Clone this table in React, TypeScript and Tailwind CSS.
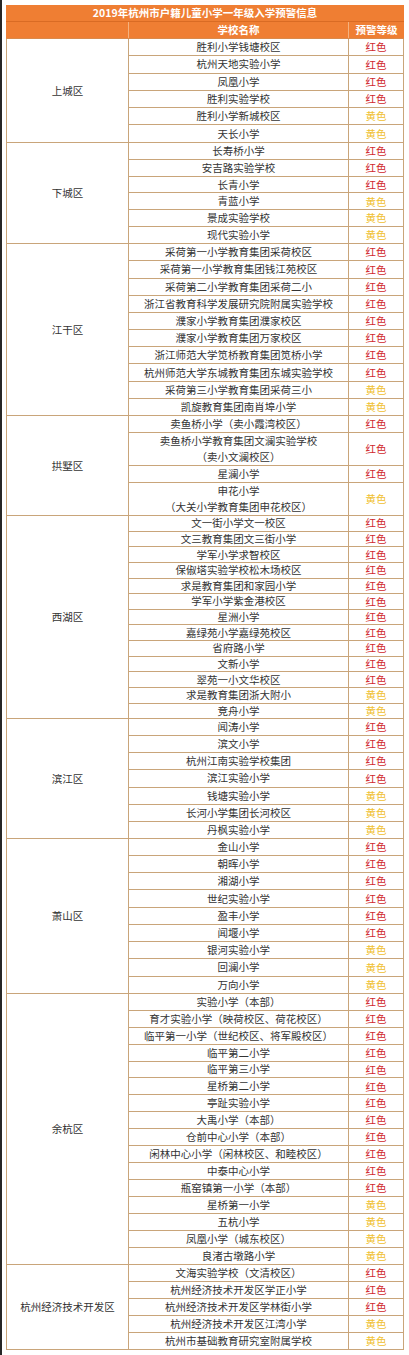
type School = { name: string; sub?: string; level: "红色" | "黄色" };
type District = { name: string; rowH: string; dblH?: string; schools: School[] };

const R = "红色" as const;
const Y = "黄色" as const;

const districts: District[] = [
  {
    name: "上城区",
    rowH: "h-[17.3px]",
    schools: [
      { name: "胜利小学钱塘校区", level: R },
      { name: "杭州天地实验小学", level: R },
      { name: "凤凰小学", level: R },
      { name: "胜利实验学校", level: R },
      { name: "胜利小学新城校区", level: Y },
      { name: "天长小学", level: Y },
    ],
  },
  {
    name: "下城区",
    rowH: "h-[16.9px]",
    schools: [
      { name: "长寿桥小学", level: R },
      { name: "安吉路实验学校", level: R },
      { name: "长青小学", level: R },
      { name: "青蓝小学", level: Y },
      { name: "景成实验学校", level: Y },
      { name: "现代实验小学", level: Y },
    ],
  },
  {
    name: "江干区",
    rowH: "h-[17.2px]",
    schools: [
      { name: "采荷第一小学教育集团采荷校区", level: R },
      { name: "采荷第一小学教育集团钱江苑校区", level: R },
      { name: "采荷第二小学教育集团采荷二小", level: R },
      { name: "浙江省教育科学发展研究院附属实验学校", level: R },
      { name: "濮家小学教育集团濮家校区", level: R },
      { name: "濮家小学教育集团万家校区", level: R },
      { name: "浙江师范大学笕桥教育集团笕桥小学", level: R },
      { name: "杭州师范大学东城教育集团东城实验学校", level: R },
      { name: "采荷第三小学教育集团采荷三小", level: Y },
      { name: "凯旋教育集团南肖埠小学", level: Y },
    ],
  },
  {
    name: "拱墅区",
    rowH: "h-[16.5px]",
    dblH: "h-[33.5px]",
    schools: [
      { name: "卖鱼桥小学（卖小霞湾校区）", level: R },
      { name: "卖鱼桥小学教育集团文澜实验学校", sub: "（卖小文澜校区）", level: R },
      { name: "星澜小学", level: R },
      { name: "申花小学", sub: "（大关小学教育集团申花校区）", level: Y },
    ],
  },
  {
    name: "西湖区",
    rowH: "h-[15.64px]",
    schools: [
      { name: "文一街小学文一校区", level: R },
      { name: "文三教育集团文三街小学", level: R },
      { name: "学军小学求智校区", level: R },
      { name: "保俶塔实验学校松木场校区", level: R },
      { name: "求是教育集团和家园小学", level: R },
      { name: "学军小学紫金港校区", level: R },
      { name: "星洲小学", level: R },
      { name: "嘉绿苑小学嘉绿苑校区", level: R },
      { name: "省府路小学", level: R },
      { name: "文新小学", level: R },
      { name: "翠苑一小文华校区", level: R },
      { name: "求是教育集团浙大附小", level: Y },
      { name: "竞舟小学", level: Y },
    ],
  },
  {
    name: "滨江区",
    rowH: "h-[17.1px]",
    schools: [
      { name: "闻涛小学", level: R },
      { name: "滨文小学", level: R },
      { name: "杭州江南实验学校集团", level: R },
      { name: "滨江实验小学", level: R },
      { name: "钱塘实验小学", level: Y },
      { name: "长河小学集团长河校区", level: Y },
      { name: "丹枫实验小学", level: Y },
    ],
  },
  {
    name: "萧山区",
    rowH: "h-[17.22px]",
    schools: [
      { name: "金山小学", level: R },
      { name: "朝晖小学", level: R },
      { name: "湘湖小学", level: R },
      { name: "世纪实验小学", level: R },
      { name: "盈丰小学", level: R },
      { name: "闻堰小学", level: R },
      { name: "银河实验小学", level: Y },
      { name: "回澜小学", level: Y },
      { name: "万向小学", level: Y },
    ],
  },
  {
    name: "余杭区",
    rowH: "h-[16.94px]",
    schools: [
      { name: "实验小学（本部）", level: R },
      { name: "育才实验小学（映荷校区、荷花校区）", level: R },
      { name: "临平第一小学（世纪校区、将军殿校区）", level: R },
      { name: "临平第二小学", level: R },
      { name: "临平第三小学", level: R },
      { name: "星桥第二小学", level: R },
      { name: "亭趾实验小学", level: R },
      { name: "大禹小学（本部）", level: R },
      { name: "仓前中心小学（本部）", level: R },
      { name: "闲林中心小学（闲林校区、和睦校区）", level: R },
      { name: "中泰中心小学", level: R },
      { name: "瓶窑镇第一小学（本部）", level: R },
      { name: "星桥第一小学", level: Y },
      { name: "五杭小学", level: Y },
      { name: "凤凰小学（城东校区）", level: Y },
      { name: "良渚古墩路小学", level: Y },
    ],
  },
  {
    name: "杭州经济技术开发区",
    rowH: "h-[17px]",
    schools: [
      { name: "文海实验学校（文清校区）", level: R },
      { name: "杭州经济技术开发区学正小学", level: R },
      { name: "杭州经济技术开发区学林街小学", level: R },
      { name: "杭州经济技术开发区江湾小学", level: Y },
      { name: "杭州市基础教育研究室附属学校", level: Y },
    ],
  },
];

function Block({ d }: { d: District }) {
  return (
    <div className="flex border-x border-[#c9a57a]">
      <div className="w-[122px] shrink-0 border-r border-b border-[#c9a57a] flex items-center justify-center">
        {d.name}
      </div>
      <div className="flex flex-col w-[274px]">
        {d.schools.map((s) => (
          <div
            key={s.name}
            className={`flex border-b border-[#c9a57a] ${s.sub ? d.dblH : d.rowH}`}
          >
            <div className="w-[220px] shrink-0 border-r border-[#c9a57a] flex flex-col items-center justify-center leading-[16px]">
              <span>{s.name}</span>
              {s.sub && <span>{s.sub}</span>}
            </div>
            <div
              className={`flex-1 flex items-center justify-center ${
                s.level === R ? "text-[#d0262b]" : "text-[#f0c030]"
              }`}
            >
              {s.level}
            </div>
          </div>
        ))}
      </div>
    </div>
  );
}

export default function App() {
  return (
    <div className="h-[1355px] bg-white flex font-['Noto_Sans_CJK_SC','Noto_Sans',sans-serif] text-[10.5px] text-[#333]">
      <div className="w-[2px] bg-[#262626]" />
      <div className="ml-[4px] mt-[5px] w-[398px]">
        {/* header */}
        <div className="h-[17px] bg-[#ef7e33] border-b border-[#d96b24] flex items-center justify-center text-white font-bold">
          2019年杭州市户籍儿童小学一年级入学预警信息
        </div>
        <div className="h-[17px] bg-[#ef7e33] border-b border-[#d98a4c] flex text-white font-bold">
          <div className="w-[123px] border-r border-[#f5b27e]" />
          <div className="w-[220px] border-r border-[#f5b27e] flex items-center justify-center">
            学校名称
          </div>
          <div className="flex-1 flex items-center justify-center">预警等级</div>
        </div>

        {districts.map((d) => (
          <Block key={d.name} d={d} />
        ))}
      </div>
    </div>
  );
}
